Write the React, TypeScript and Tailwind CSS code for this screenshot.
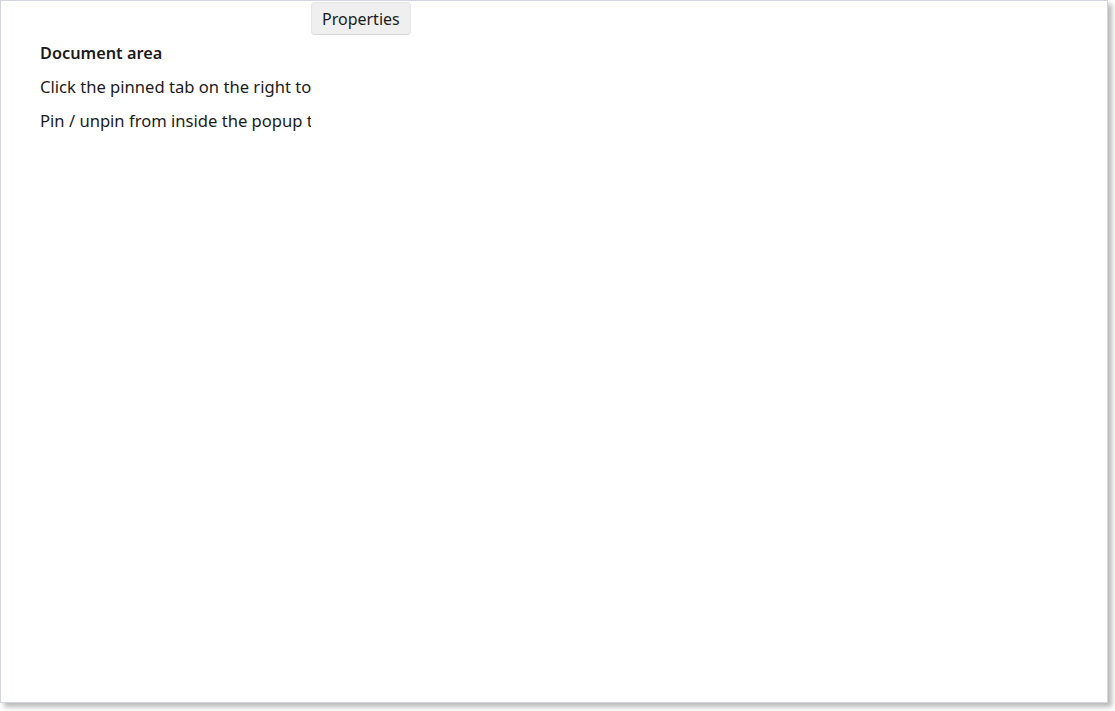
export default function App() {
  return (
    <div className="w-[1115px] h-[711px] bg-white" style={{ fontFamily: '"Noto Sans", "Open Sans", sans-serif' }}>
      <div className="w-[1108px] h-[703px] border border-[#d3d5e0] bg-white shadow-[4px_4px_5px_rgba(0,0,0,0.28)] flex">
        <div className="w-[310px] overflow-hidden whitespace-nowrap pl-[39px] pt-[41px] text-[16.6px] text-[#1b1b1b]">
          <div className="font-semibold h-[34px] leading-[22px] text-[16.3px]">Document area</div>
          <div className="h-[34px] leading-[22px]">Click the pinned tab on the right to open the properties panel</div>
          <div className="h-[34px] leading-[22px]">Pin / unpin from inside the popup to change the layout</div>
        </div>
        <div className="pt-[1px]">
          <button className="h-[33px] px-[10px] bg-[#efefef] rounded-[4px] border border-[#e6e6e6] border-b-[#d8d8d8] text-[16px] text-[#1b1b1b] leading-[20px]">
            Properties
          </button>
        </div>
      </div>
    </div>
  );
}
